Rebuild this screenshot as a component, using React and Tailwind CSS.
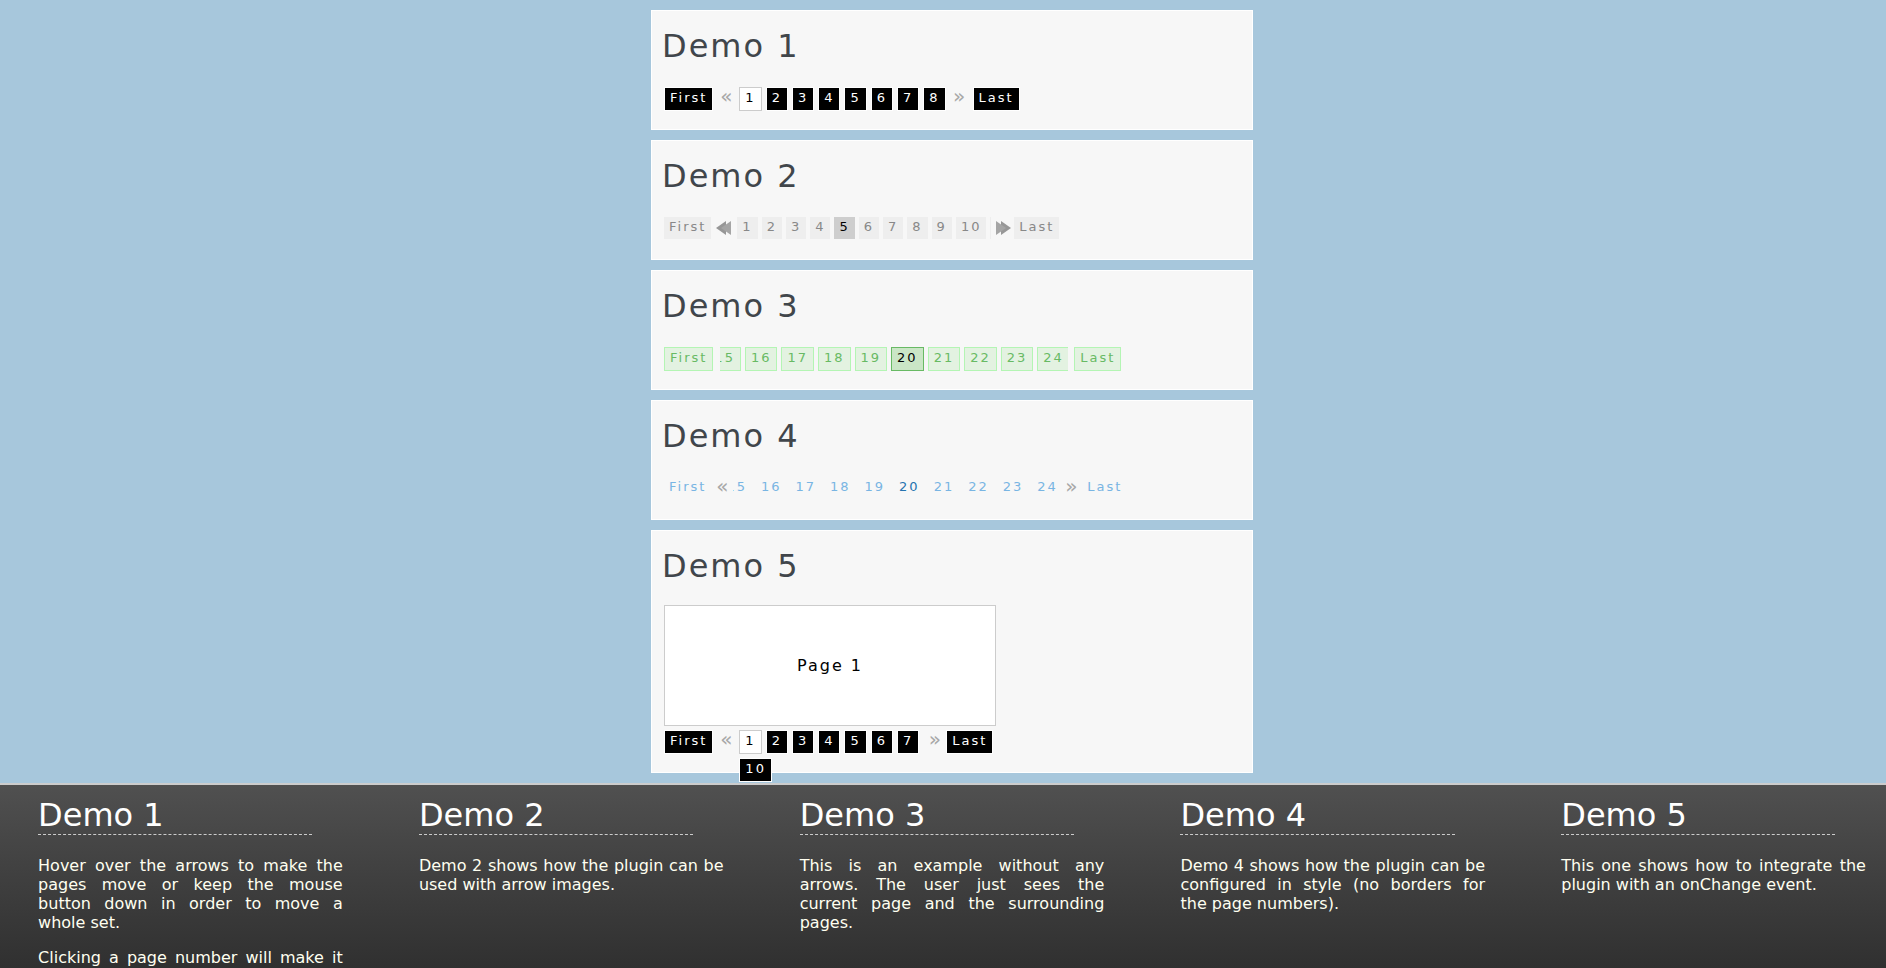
import { useState } from "react"
import clsx from "clsx"

const range = (from, to) => Array.from({ length: to - from + 1 }, (_, i) => from + i)

// Item classes for each pager look
const themes = {
  black: {
    item: "border border-white bg-black text-white",
    active: "border border-[#cccccc] bg-white text-black",
  },
  gray: {
    item: "bg-[#eeeeee] text-[#888888]",
    active: "bg-[#cecece] text-black",
  },
  green: {
    item: "border border-[#b4f5b4] bg-[#e3f2e1] text-[#68ba64]",
    active: "border border-[#68ba64] bg-[#cae6c6] text-black",
  },
  plain: {
    item: "text-[#79b5e3]",
    active: "text-[#2573af]",
  },
}

const itemClass = "block shrink-0 px-[5px] pt-[2px] pb-1 leading-4"

function ArrowImage({ flip }) {
  return (
    <svg width="15" height="14" viewBox="0 0 15 14" className={clsx("block", flip && "-scale-x-100")}>
      <path d="M10 0 V14 L0 7 Z" fill="#979797" />
      <path d="M15 0 V14 L5 7 Z" fill="#a5a5a5" />
    </svg>
  )
}

function Arrow({ kind, flip, width, onClick }) {
  if (!kind) return <span className={width} />

  return (
    <button
      type="button"
      aria-label={flip ? "Next pages" : "Previous pages"}
      className={clsx(
        "flex shrink-0 items-center text-xl leading-none tracking-normal text-[#a8a8a8]",
        kind === "image" ? "h-[22px] pl-[5px]" : "h-[18px] justify-center",
        width
      )}
      onClick={onClick}
    >
      {kind === "image" ? <ArrowImage flip={flip} /> : flip ? "»" : "«"}
    </button>
  )
}

function Pager({ label, theme, pages, current, onChange, before, after, viewClass, listClass, arrows }) {
  const { item, active } = themes[theme]
  const last = pages[pages.length - 1]

  return (
    <nav aria-label={label} className="ml-[2px] flex h-6 items-start text-[13px]">
      <button type="button" className={clsx(itemClass, item)} onClick={() => onChange(1)}>
        First
      </button>
      <Arrow kind={arrows} width={before} onClick={() => onChange(Math.max(1, current - 1))} />
      <div className={clsx("shrink-0 overflow-x-clip", viewClass)}>
        <ul className={clsx("flex gap-1", listClass)}>
          {pages.map((page) => (
            <li key={page} className="shrink-0">
              <button
                type="button"
                className={clsx(itemClass, page === current ? active : item)}
                onClick={() => onChange(page)}
              >
                {page}
              </button>
            </li>
          ))}
        </ul>
      </div>
      <Arrow kind={arrows} flip width={after} onClick={() => onChange(Math.min(last, current + 1))} />
      <button type="button" className={clsx(itemClass, item)} onClick={() => onChange(last)}>
        Last
      </button>
    </nav>
  )
}

function Demo({ title, children }) {
  return (
    <section className="w-[602px] border border-white bg-[#f7f7f7] px-[10px] pt-[17px] pb-[18px] tracking-[2px]">
      <h1 className="mb-5 text-[32px] leading-[37px] text-[#41464b]">{title}</h1>
      {children}
    </section>
  )
}

const notes = [
  {
    title: "Demo 1",
    text: [
      "Hover over the arrows to make the pages move or keep the mouse button down in order to move a whole set.",
      "Clicking a page number will make it",
    ],
  },
  { title: "Demo 2", text: ["Demo 2 shows how the plugin can be used with arrow images."] },
  {
    title: "Demo 3",
    text: ["This is an example without any arrows. The user just sees the current\u00a0page and the surrounding pages."],
  },
  {
    title: "Demo 4",
    text: ["Demo 4 shows how the plugin can be configured in style (no borders for the\u00a0page numbers)."],
  },
  { title: "Demo 5", text: ["This one shows how to integrate the plugin with an onChange event."] },
]

export default function App() {
  const [page1, setPage1] = useState(1)
  const [page2, setPage2] = useState(5)
  const [page3, setPage3] = useState(20)
  const [page4, setPage4] = useState(20)
  const [page5, setPage5] = useState(1)

  return (
    <div className="h-screen overflow-hidden bg-[#a7c7dc] font-['DejaVu_Sans',sans-serif]">
      <div className="-mr-[18px] flex h-full flex-col">
        <main className="flex shrink-0 flex-col items-center gap-[10px] py-[10px]">
          <Demo title="Demo 1">
            <div className="pt-[2px]">
              <Pager
                label="Demo 1"
                theme="black"
                arrows="text"
                pages={range(1, 8)}
                current={page1}
                onChange={setPage1}
                before="w-[26px]"
                after="w-[27px]"
              />
            </div>
          </Demo>

          <Demo title="Demo 2">
            <div className="pt-[2px]">
              <Pager
                label="Demo 2"
                theme="gray"
                arrows="image"
                pages={range(1, 11)}
                current={page2}
                onChange={setPage2}
                before="w-[26px]"
                after="w-[23px]"
                viewClass="w-[254px]"
              />
            </div>
          </Demo>

          <Demo title="Demo 3">
            <div className="pt-[2px]">
              <Pager
                label="Demo 3"
                theme="green"
                pages={range(15, 25)}
                current={page3}
                onChange={setPage3}
                before="w-[7px]"
                after="w-[6px]"
                viewClass="w-[348px]"
                listClass="-ml-3"
              />
            </div>
          </Demo>

          <Demo title="Demo 4">
            <div className="pt-[2px]">
              <Pager
                label="Demo 4"
                theme="plain"
                arrows="text"
                pages={range(15, 24)}
                current={page4}
                onChange={setPage4}
                before="w-[22px]"
                after="w-[22px]"
                viewClass="w-[327px]"
                listClass="-ml-3"
              />
            </div>
          </Demo>

          <Demo title="Demo 5">
            <div className="mb-1 ml-[2px] flex h-[121px] w-[332px] items-center justify-center border border-[#cccccc] bg-white text-base text-black">
              Page {page5}
            </div>
            {/* the list is too narrow for ten pages, so the last one wraps below the row */}
            <Pager
              label="Demo 5"
              theme="black"
              arrows="text"
              pages={range(1, 10)}
              current={page5}
              onChange={setPage5}
              before="w-[26px]"
              after="w-[23px]"
              viewClass="w-[184px]"
              listClass="w-[240px] flex-wrap"
            />
          </Demo>
        </main>

        <footer className="flex min-h-0 flex-1 overflow-hidden border-t-2 border-[#cccccc] bg-linear-to-b from-[#505050] to-[#303030]">
          {notes.map((note) => (
            <article key={note.title} className="w-1/5 px-[2%] pt-3">
              <h2 className="w-[90%] border-b border-dashed border-[#cccccc] text-[32px] leading-[37px] text-white">
                {note.title}
              </h2>
              <div className="mt-[21px] flex flex-col gap-4 text-justify text-base leading-[19px] text-[#fffff0]">
                {note.text.map((line, i) => (
                  <p key={line} className={clsx(i > 0 && "[text-align-last:justify]")}>
                    {line}
                  </p>
                ))}
              </div>
            </article>
          ))}
        </footer>
      </div>
    </div>
  )
}
